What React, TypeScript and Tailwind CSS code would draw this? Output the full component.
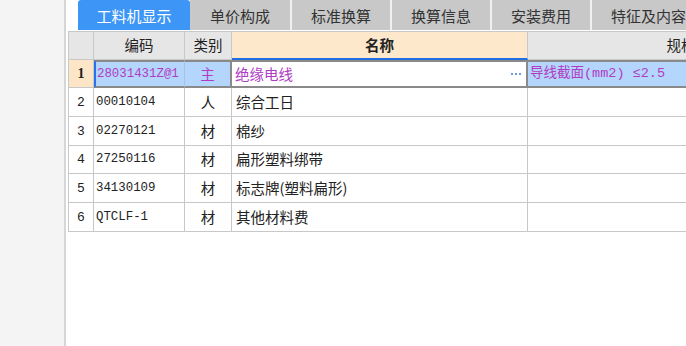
import React from "react";

const mono = "font-['Liberation_Mono','Noto_Sans_CJK_SC',monospace]";
const cjk = "font-['Noto_Sans_CJK_SC',sans-serif]";

const tabs = ["单价构成", "标准换算", "换算信息", "安装费用", "特征及内容"];

const rows = [
  { no: "2", code: "00010104", cat: "人", name: "综合工日", h: "h-[29px]" },
  { no: "3", code: "02270121", cat: "材", name: "棉纱", h: "h-[29px]" },
  { no: "4", code: "27250116", cat: "材", name: "扁形塑料绑带", h: "h-[28px]" },
  { no: "5", code: "34130109", cat: "材", name: "标志牌(塑料扁形)", h: "h-[29px]" },
  { no: "6", code: "QTCLF-1", cat: "材", name: "其他材料费", h: "h-[29px]" },
];

export default function App() {
  return (
    <div className="flex h-[346px] w-[686px] overflow-hidden bg-white text-[#222]">
      {/* left panel */}
      <div className="w-[66px] shrink-0 border-r-2 border-[#d6d6d6] bg-[#f4f4f4]" />

      <div className="flex min-w-0 flex-1 flex-col pl-[2px]">
        {/* tab bar */}
        <div className="ml-[10px] flex h-[30px] shrink-0 text-[15px] leading-none">
          <div className={`flex w-[112px] shrink-0 items-center justify-center rounded-t-[3px] bg-[#3d96f5] text-white ${cjk}`}>
            工料机显示
          </div>
          <div className="flex flex-1 bg-[#c8c8c8] text-[#333]">
            {tabs.map((t, i) => (
              <div
                key={t}
                className={
                  i === 0
                    ? `flex shrink-0 items-center whitespace-nowrap px-5 ${cjk}`
                    : `flex shrink-0 items-center whitespace-nowrap border-l-2 border-[#f0f0f0] px-[19px] ${cjk}`
                }
              >
                {t}
              </div>
            ))}
          </div>
        </div>

        {/* grid */}
        <div className="mt-[1px] grid w-max grid-cols-[25px_91px_47px_296px_306px] border-l border-t border-[#c8c8c8] text-[14.5px] leading-none">
          {/* header */}
          <div className="h-[28px] border-b border-r border-[#c8c8c8] bg-[#e6e6e6]" />
          <div className={`flex h-[28px] items-center justify-center border-b border-r border-[#c8c8c8] bg-[#e6e6e6] ${cjk}`}>编码</div>
          <div className={`flex h-[28px] items-center justify-center border-b border-r border-[#c8c8c8] bg-[#e6e6e6] ${cjk}`}>类别</div>
          <div className={`flex h-[28px] items-center justify-center border-b-2 border-r border-b-[#1f6fe3] border-r-[#c8c8c8] bg-[#fde8cc] font-bold ${cjk}`}>名称</div>
          <div className={`flex h-[28px] items-center justify-center border-b border-[#c8c8c8] bg-[#e6e6e6] ${cjk}`}>规格</div>

          {/* selected row */}
          <div className="flex h-[28px] items-center justify-center border-b border-r border-[#c8c8c8] bg-[#fde6c8] font-['Liberation_Serif',serif] text-[14px] font-bold">1</div>
          <div className={`flex h-[28px] items-center border-y-2 border-l-2 border-r border-y-[#8a8a8a] border-l-[#2a73e8] border-r-[#a9c3e3] bg-[#b4d5fc] pl-[1px] text-[12.4px] text-[#b03cc6] ${mono}`}>28031431Z@1</div>
          <div className={`flex h-[28px] items-center justify-center border-y-2 border-r-2 border-[#8a8a8a] bg-[#b4d5fc] text-[#b03cc6] ${cjk}`}>主</div>
          <div className={`flex h-[28px] items-center justify-between border-y-2 border-r-2 border-y-[#8a8a8a] border-r-[#8a8a8a] bg-white pl-[3px] pr-[5px] text-[#b03cc6] ${cjk}`}>
            <span>绝缘电线</span>
            <span className="flex gap-[2px]">
              <span className="h-[2px] w-[2px] bg-[#6b9fdc]" />
              <span className="h-[2px] w-[2px] bg-[#6b9fdc]" />
              <span className="h-[2px] w-[2px] bg-[#6b9fdc]" />
            </span>
          </div>
          <div className={`flex h-[28px] items-center whitespace-nowrap border-y-2 border-[#8a8a8a] bg-[#b4d5fc] pl-[2px] text-[13.5px] text-[#b03cc6] ${mono}`}>
            导线截面(mm2) ≤2.5
          </div>

          {rows.map((r) => (
            <React.Fragment key={r.no}>
              <div className={`flex ${r.h} items-center justify-center border-b border-r border-[#c8c8c8] text-[13px] ${mono}`}>{r.no}</div>
              <div className={`flex ${r.h} items-center border-b border-r border-[#c8c8c8] pl-[2px] text-[12.4px] ${mono}`}>{r.code}</div>
              <div className={`flex ${r.h} items-center justify-center border-b border-r border-[#c8c8c8] ${cjk}`}>{r.cat}</div>
              <div className={`flex ${r.h} items-center border-b border-r border-[#c8c8c8] pl-[4px] ${cjk}`}>{r.name}</div>
              <div className={`${r.h} border-b border-[#c8c8c8]`} />
            </React.Fragment>
          ))}
        </div>
      </div>
    </div>
  );
}
